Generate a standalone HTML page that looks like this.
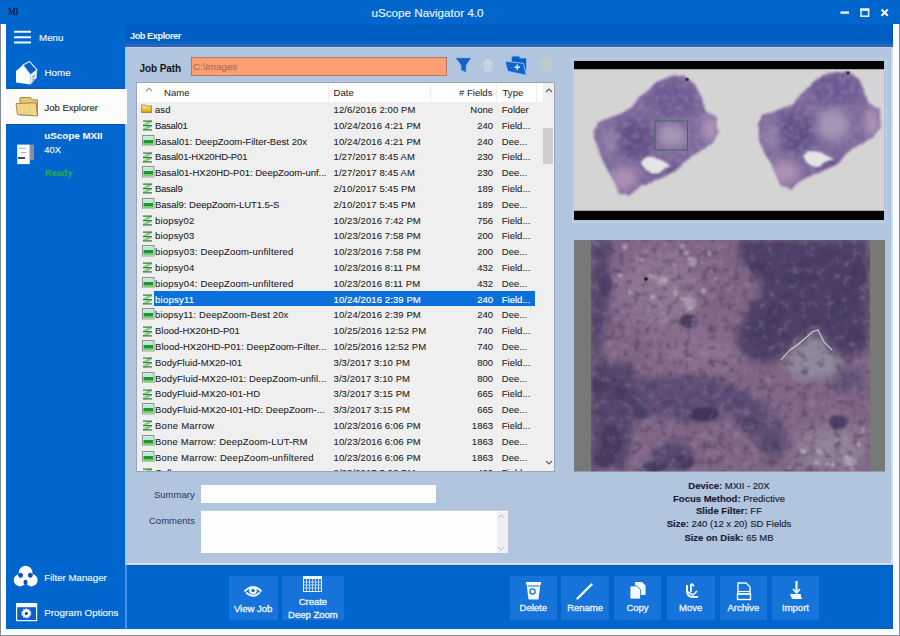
<!DOCTYPE html>
<html><head><meta charset="utf-8">
<style>
*{margin:0;padding:0;box-sizing:border-box}
html,body{width:900px;height:636px;overflow:hidden;background:#7d8a99}
body{position:relative;font-family:"Liberation Sans",sans-serif}
.abs{position:absolute}
svg{display:block}
#frame{position:absolute;left:1px;top:0;width:898px;height:635px;background:#fcfdfe}
#title{position:absolute;left:0;top:0;width:900px;height:24px;background:#0066cc}
#title .t{position:absolute;left:371.5px;top:6px;font-size:11.6px;color:#e6effa;white-space:nowrap;letter-spacing:0.03px;-webkit-text-stroke:0.2px #e6effa}
#nav{position:absolute;left:6px;top:23px;width:119px;height:606px;background:#0066cd}
#hdr{position:absolute;z-index:2;left:125px;top:23.9px;width:768px;height:23px;background:linear-gradient(#005ec2 0,#005ec2 17.6px,#0766cc 17.6px,#0766cc 20px,#2c64b2 20px)}
#hdr .t{position:absolute;left:5px;top:7.4px;font-size:9.3px;font-weight:bold;color:#eef4fc;letter-spacing:-0.5px}
#content{position:absolute;left:125px;top:46px;width:766.5px;height:519px;background:#b1c5de}
#tline{position:absolute;left:125px;top:46.9px;width:766px;height:1.2px;background:#bcd2ee}
#lline{position:absolute;left:125.4px;top:46.5px;width:1.9px;height:518.5px;background:#a6c6ee}
#lline2{position:absolute;left:125.4px;top:565px;width:1.9px;height:64px;background:#4592e2}
#bline{position:absolute;left:125px;top:562.8px;width:766px;height:1.8px;background:#cddff4}
#bline2{position:absolute;left:125px;top:564.6px;width:768px;height:1.4px;background:#0558ba}
#rline{position:absolute;left:891px;top:46.5px;width:2px;height:518.5px;background:#cddcf0}
#tool{position:absolute;left:125px;top:565px;width:768px;height:64px;background:#0066cd}
.navt{position:absolute;font-size:9.8px;color:#f2f6fc;white-space:nowrap;-webkit-text-stroke:0.15px currentColor}
.btn{position:absolute;top:575.5px;height:44px;background:#1573d9}
.btn .l{position:absolute;left:0;width:100%;text-align:center;font-size:9.5px;color:#e8f1fc;white-space:nowrap;-webkit-text-stroke:0.35px #e8f1fc}
.btn svg{position:absolute}
#list{position:absolute;left:136px;top:82px;width:419px;height:389.5px;background:#efefef;border:1px solid #9aa6b6;overflow:hidden}
#lh{position:absolute;left:0;top:0;width:417px;height:19px;background:#fdfdfd}
.row{position:absolute;left:0;width:406px;height:15.8px;font-size:9.5px;color:#222;white-space:nowrap;-webkit-text-stroke:0.08px #222}
.row span{position:absolute;top:2.3px}
.row .ic{position:absolute}
.row .n{left:18px}
.row .d{left:196.5px;letter-spacing:0.1px}
.row .fl{right:50px;text-align:right}
.row .t{left:364.8px}
.row.sel span{color:#fff;-webkit-text-stroke:0.15px #fff}
.sel::before{content:"";position:absolute;left:16.6px;top:-0.2px;width:381.6px;height:15px;background:#0b70d9}
.lhx{position:absolute;top:4.3px;font-size:9.6px;color:#222}
.coldiv{position:absolute;top:0;width:1px;height:19px;background:#ececec}
#sb{position:absolute;left:406px;top:0;width:11px;height:388px;background:#f0f0f0}
#thumb{position:absolute;left:0px;top:45px;width:10px;height:36px;background:#cdcdcd}
.info{position:absolute;left:574px;width:310px;text-align:center;font-size:9.5px;color:#1b2030;white-space:nowrap;-webkit-text-stroke:0.15px #1b2030}
.info b{font-weight:bold}

</style></head><body>
<svg width="0" height="0" style="position:absolute">
<defs>
<symbol id="zig" viewBox="0 0 11 11">
<path d="M9.6 1.2 L1.2 5.6 M9.6 5.6 L1.2 9.8" stroke="#9ad69a" stroke-width="2.6"/>
<path d="M1 1.2 H10 M1 5.6 H10 M1 9.8 H10" stroke="#3a7a40" stroke-width="1.3"/>
<path d="M8.5 2 L2.5 5 M8.5 6.4 L2.5 9.2" stroke="#6cc06c" stroke-width="0.9"/>
</symbol>
<symbol id="dz" viewBox="0 0 13 11.5">
<rect x="0.5" y="0.5" width="11.5" height="10.8" fill="#e8f2ee" stroke="#8a948c"/>
<rect x="1.5" y="1.5" width="9.6" height="3.6" fill="#c2e6da"/>
<rect x="1.5" y="5" width="9.6" height="3.6" fill="#1a9a2a"/>
<rect x="1.5" y="8.5" width="9.6" height="2" fill="#78cc78"/>
</symbol>
<symbol id="fold" viewBox="0 0 11 9">
<linearGradient id="fg" x1="0" y1="0" x2="0" y2="1"><stop offset="0" stop-color="#fff0a0"/><stop offset="0.5" stop-color="#f2cc38"/><stop offset="1" stop-color="#c89a20"/></linearGradient>
<path d="M0.5 1 H4 L5 2 H10.5 V8.5 H0.5 Z" fill="url(#fg)" stroke="#8a6a20" stroke-width="0.7"/>
</symbol>
</defs></svg>

<div id="frame"></div>
<div id="title"><span class="t">uScope Navigator 4.0</span></div>
<div id="nav"></div>
<div id="hdr"><span class="t">Job Explorer</span></div>
<div id="content"></div><div id="tline"></div>
<div id="rline"></div>
<div id="tool"></div>
<div id="bline"></div><div id="bline2"></div><div id="lline"></div><div id="lline2"></div>

<!-- TITLE ICONS -->
<div class="abs" style="left:8px;top:5.5px;font-size:10.5px;line-height:12px;font-weight:bold;color:#0b1d45;font-family:'Liberation Serif',serif;letter-spacing:-0.6px;transform:scaleX(0.78);transform-origin:0 0">MI</div>
<svg class="abs" style="left:838px;top:6px" width="54" height="14">
<path d="M2.5 6.6 H11" stroke="#eef4fc" stroke-width="2.4"/>
<rect x="23" y="3.4" width="7.6" height="6.8" fill="none" stroke="#eef4fc" stroke-width="1.5"/>
<path d="M22.3 3.6 H31.3" stroke="#eef4fc" stroke-width="2.6"/>
<path d="M43.5 3.6 L49.8 9.8 M49.8 3.6 L43.5 9.8" stroke="#f4f8fd" stroke-width="2.1"/>
</svg>

<!-- NAV -->
<svg class="abs" style="left:13px;top:29px" width="20" height="16">
<path d="M1 2.8 H18 M1 8.3 H18 M1 13.5 H18" stroke="#f4f8fd" stroke-width="2"/>
</svg>
<div class="navt" style="left:39px;top:31.8px">Menu</div>
<svg class="abs" style="left:14px;top:60px" width="25" height="26">
<path d="M2 11 L9 5 L16.5 15 L16.5 24.5 L2 22.5 Z" fill="#fbfdff"/>
<path d="M9 5 L15.5 1.5 L23 10 L16.5 15 Z" fill="#0a5cc4" stroke="#e2efff" stroke-width="1.1"/>
<path d="M16.5 15 L23 10 L22.5 18 L16.5 24.5 Z" fill="#e8f0fa"/>
<path d="M18 17.5 L21 15.5 M18 20.5 L20.5 19" stroke="#5a6c88" stroke-width="1"/>
</svg>
<div class="navt" style="left:44.5px;top:67px">Home</div>
<div class="abs" style="left:6px;top:87.4px;width:119px;height:1.4px;background:#0a5cbc"></div>
<div class="abs" style="left:6px;top:88.8px;width:121.3px;height:35px;background:#fbfbfa"></div>
<div class="abs" style="left:6px;top:123.8px;width:119px;height:1.6px;background:#0754b4"></div>
<svg class="abs" style="left:14px;top:95px" width="26" height="23">
<path d="M6 2.5 H16.5 L18 4.8 H23.5 V20 H6 Z" fill="#e8c76a" stroke="#a08446" stroke-width="0.9"/>
<path d="M2 8.5 L22 7.8 L23.5 21 L3.5 19.5 Z" fill="#f1d68a" stroke="#9a7e40" stroke-width="0.9"/>
<path d="M6 10 L7 18 M10 9.8 L10.8 18.5 M15 9.6 L15.5 19" stroke="#e6c874" stroke-width="0.8"/>
</svg>
<div class="navt" style="left:44.5px;top:101.5px;color:#383838;font-size:9.5px;-webkit-text-stroke:0.2px #383838">Job Explorer</div>
<svg class="abs" style="left:16px;top:143px" width="20" height="23">
<rect x="1.2" y="1.6" width="12.6" height="19.5" fill="#fafcff"/>
<rect x="13.8" y="1.6" width="4.2" height="15.5" fill="#8a8f98"/>
<path d="M3 5.2 H10 M5 9.5 H10" stroke="#9aa0aa" stroke-width="0.9"/>
<path d="M2 15 H9" stroke="#1c1c24" stroke-width="1.6"/>
</svg>
<div class="navt" style="left:44.3px;top:129.7px;font-weight:bold;font-size:9.8px;-webkit-text-stroke:0.1px">uScope MXII</div>
<div class="navt" style="left:44.3px;top:144.5px;font-size:9.3px">40X</div>
<div class="navt" style="left:45px;top:168.2px;color:#22ad4c;font-weight:bold;font-size:9.2px;-webkit-text-stroke:0.1px #22ad4c">Ready</div>

<svg class="abs" style="left:13px;top:564px" width="26" height="26">
<circle cx="12.6" cy="8.6" r="6.8" fill="#fafcff"/>
<circle cx="7" cy="16.2" r="6.2" fill="#fafcff"/>
<circle cx="18.4" cy="16.2" r="6.2" fill="#fafcff"/>
<path d="M6 9 L19 9 L21 16 L5 16 Z" fill="#fafcff"/>
<ellipse cx="7.6" cy="11.2" rx="2.4" ry="2.5" fill="#0a52b0"/>
<ellipse cx="17.3" cy="11.2" rx="2.4" ry="2.5" fill="#0a52b0"/>
<ellipse cx="12.5" cy="18.2" rx="2" ry="2.4" fill="#0a52b0"/>
</svg>
<div class="navt" style="left:44.3px;top:572px;font-size:9.7px">Filter Manager</div>
<svg class="abs" style="left:15px;top:602px" width="24" height="20">
<rect x="1.6" y="1.6" width="20" height="17" fill="#0a5fc8" stroke="#f4f8fd" stroke-width="1.2"/>
<rect x="1.2" y="1.2" width="20.8" height="4" fill="#f4f8fd"/>
<path d="M11.3 6 L12.4 7.6 L14.3 7 L14.5 9 L16.4 9.7 L15.6 11.4 L16.4 13.1 L14.5 13.8 L14.3 15.8 L12.4 15.2 L11.3 16.8 L10.2 15.2 L8.3 15.8 L8.1 13.8 L6.2 13.1 L7 11.4 L6.2 9.7 L8.1 9 L8.3 7 L10.2 7.6 Z" fill="#f4f8fd"/>
<circle cx="11.3" cy="11.4" r="1.5" fill="#0a3a80"/>
</svg>
<div class="navt" style="left:44.3px;top:606.5px;font-size:9.8px">Program Options</div>

<!-- PATH -->
<div class="abs" style="left:139.6px;top:62.6px;font-size:10px;font-weight:bold;color:#131820;letter-spacing:-0.1px">Job Path</div>
<div class="abs" style="left:191.3px;top:57px;width:256px;height:19px;background:#fd9f74;border:1px solid #b27a62"></div>
<div class="abs" style="left:193px;top:61.3px;font-size:9.7px;color:#b4735a;-webkit-text-stroke:0.25px #b4735a">C:\Images</div>
<svg class="abs" style="left:453px;top:54px" width="106" height="24">
<path d="M2.7 4 H18 L13 11 V18 L8.2 16 V11 Z" fill="#1062c6" stroke="#5d98e0" stroke-width="0.5"/>
<path d="M34.7 4 L27 11.3 H31 V18 H38.5 V11.3 H42.5 Z" fill="#cad6e3" opacity="0.8"/>
<path d="M58.5 4.5 L59 2 H66.5 L67 4 H73.5 V16.5 H58.5 Z" fill="#0f5fc3" stroke="#8ab8f0" stroke-width="0.9"/>
<path d="M52 7.3 L70.5 9.3 L73.3 21.3 L54.7 17.3 Z" fill="#1164c8" stroke="#9cc4f4" stroke-width="0.9"/>
<path d="M61.5 13.3 H67 M64.3 10.5 V16" stroke="#e8f2ff" stroke-width="1.4"/>
<circle cx="93" cy="10.5" r="7.5" fill="#c9cbc6" opacity="0.55"/>
</svg>

<!-- LIST -->
<div id="list">
<div id="lh">
<svg class="abs" style="left:8px;top:4px" width="8" height="5"><path d="M1 4 L4 1 L7 4" fill="none" stroke="#9a9a9a" stroke-width="1.2"/></svg>
<span class="lhx" style="left:27px">Name</span>
<span class="coldiv" style="left:191px"></span>
<span class="lhx" style="left:196.5px">Date</span>
<span class="coldiv" style="left:293px"></span>
<span class="lhx" style="right:61.5px;text-align:right"># Fields</span>
<span class="coldiv" style="left:359px"></span>
<span class="lhx" style="left:365.5px">Type</span>
<span class="coldiv" style="left:399px"></span>
</div>
<div id="rows" style="position:absolute;left:0;top:0">
<div class="row" style="top:18.80px"><svg class="ic" style="left:4.2px;top:2.2px" width="11.2" height="9"><use href="#fold"/></svg><span class="n" style="letter-spacing:0.057px">asd</span><span class="d">12/6/2016 2:00 PM</span><span class="fl">None</span><span class="t">Folder</span></div>
<div class="row" style="top:34.60px"><svg class="ic" style="left:5px;top:2.5px" width="11" height="11"><use href="#zig"/></svg><span class="n" style="letter-spacing:-0.263px">Basal01</span><span class="d">10/24/2016 4:21 PM</span><span class="fl">240</span><span class="t">Field...</span></div>
<div class="row" style="top:50.40px"><svg class="ic" style="left:4.8px;top:1.3px" width="13" height="11.5"><use href="#dz"/></svg><span class="n" style="letter-spacing:0.033px">Basal01: DeepZoom-Filter-Best 20x</span><span class="d">10/24/2016 4:21 PM</span><span class="fl">240</span><span class="t">Dee...</span></div>
<div class="row" style="top:66.20px"><svg class="ic" style="left:5px;top:2.5px" width="11" height="11"><use href="#zig"/></svg><span class="n" style="letter-spacing:-0.153px">Basal01-HX20HD-P01</span><span class="d">1/27/2017 8:45 AM</span><span class="fl">230</span><span class="t">Field...</span></div>
<div class="row" style="top:82.00px"><svg class="ic" style="left:4.8px;top:1.3px" width="13" height="11.5"><use href="#dz"/></svg><span class="n" style="letter-spacing:-0.003px">Basal01-HX20HD-P01: DeepZoom-unf...</span><span class="d">1/27/2017 8:45 AM</span><span class="fl">230</span><span class="t">Dee...</span></div>
<div class="row" style="top:97.80px"><svg class="ic" style="left:5px;top:2.5px" width="11" height="11"><use href="#zig"/></svg><span class="n" style="letter-spacing:-0.260px">Basal9</span><span class="d">2/10/2017 5:45 PM</span><span class="fl">189</span><span class="t">Field...</span></div>
<div class="row" style="top:113.60px"><svg class="ic" style="left:4.8px;top:1.3px" width="13" height="11.5"><use href="#dz"/></svg><span class="n" style="letter-spacing:-0.034px">Basal9: DeepZoom-LUT1.5-S</span><span class="d">2/10/2017 5:45 PM</span><span class="fl">189</span><span class="t">Dee...</span></div>
<div class="row" style="top:129.40px"><svg class="ic" style="left:5px;top:2.5px" width="11" height="11"><use href="#zig"/></svg><span class="n" style="letter-spacing:0.171px">biopsy02</span><span class="d">10/23/2016 7:42 PM</span><span class="fl">756</span><span class="t">Field...</span></div>
<div class="row" style="top:145.20px"><svg class="ic" style="left:5px;top:2.5px" width="11" height="11"><use href="#zig"/></svg><span class="n" style="letter-spacing:0.171px">biopsy03</span><span class="d">10/23/2016 7:58 PM</span><span class="fl">200</span><span class="t">Field...</span></div>
<div class="row" style="top:161.00px"><svg class="ic" style="left:4.8px;top:1.3px" width="13" height="11.5"><use href="#dz"/></svg><span class="n" style="letter-spacing:0.209px">biopsy03: DeepZoom-unfiltered</span><span class="d">10/23/2016 7:58 PM</span><span class="fl">200</span><span class="t">Dee...</span></div>
<div class="row" style="top:176.80px"><svg class="ic" style="left:5px;top:2.5px" width="11" height="11"><use href="#zig"/></svg><span class="n" style="letter-spacing:0.171px">biopsy04</span><span class="d">10/23/2016 8:11 PM</span><span class="fl">432</span><span class="t">Field...</span></div>
<div class="row" style="top:192.60px"><svg class="ic" style="left:4.8px;top:1.3px" width="13" height="11.5"><use href="#dz"/></svg><span class="n" style="letter-spacing:0.209px">biopsy04: DeepZoom-unfiltered</span><span class="d">10/23/2016 8:11 PM</span><span class="fl">432</span><span class="t">Dee...</span></div>
<div class="row sel" style="top:208.40px"><svg class="ic" style="left:5px;top:2.5px" width="11" height="11"><use href="#zig"/></svg><span class="n" style="letter-spacing:0.259px">biopsy11</span><span class="d">10/24/2016 2:39 PM</span><span class="fl">240</span><span class="t">Field...</span></div>
<div class="row" style="top:224.20px"><svg class="ic" style="left:4.8px;top:1.3px" width="13" height="11.5"><use href="#dz"/></svg><span class="n" style="letter-spacing:0.139px">biopsy11: DeepZoom-Best 20x</span><span class="d">10/24/2016 2:39 PM</span><span class="fl">240</span><span class="t">Dee...</span></div>
<div class="row" style="top:240.00px"><svg class="ic" style="left:5px;top:2.5px" width="11" height="11"><use href="#zig"/></svg><span class="n" style="letter-spacing:-0.013px">Blood-HX20HD-P01</span><span class="d">10/25/2016 12:52 PM</span><span class="fl">740</span><span class="t">Field...</span></div>
<div class="row" style="top:255.80px"><svg class="ic" style="left:4.8px;top:1.3px" width="13" height="11.5"><use href="#dz"/></svg><span class="n" style="letter-spacing:0.070px">Blood-HX20HD-P01: DeepZoom-Filter...</span><span class="d">10/25/2016 12:52 PM</span><span class="fl">740</span><span class="t">Dee...</span></div>
<div class="row" style="top:271.60px"><svg class="ic" style="left:5px;top:2.5px" width="11" height="11"><use href="#zig"/></svg><span class="n" style="letter-spacing:0.033px">BodyFluid-MX20-I01</span><span class="d">3/3/2017 3:10 PM</span><span class="fl">800</span><span class="t">Field...</span></div>
<div class="row" style="top:287.40px"><svg class="ic" style="left:4.8px;top:1.3px" width="13" height="11.5"><use href="#dz"/></svg><span class="n" style="letter-spacing:0.111px">BodyFluid-MX20-I01: DeepZoom-unfil...</span><span class="d">3/3/2017 3:10 PM</span><span class="fl">800</span><span class="t">Dee...</span></div>
<div class="row" style="top:303.20px"><svg class="ic" style="left:5px;top:2.5px" width="11" height="11"><use href="#zig"/></svg><span class="n" style="letter-spacing:0.082px">BodyFluid-MX20-I01-HD</span><span class="d">3/3/2017 3:15 PM</span><span class="fl">665</span><span class="t">Field...</span></div>
<div class="row" style="top:319.00px"><svg class="ic" style="left:4.8px;top:1.3px" width="13" height="11.5"><use href="#dz"/></svg><span class="n" style="letter-spacing:0.090px">BodyFluid-MX20-I01-HD: DeepZoom-...</span><span class="d">3/3/2017 3:15 PM</span><span class="fl">665</span><span class="t">Dee...</span></div>
<div class="row" style="top:334.80px"><svg class="ic" style="left:5px;top:2.5px" width="11" height="11"><use href="#zig"/></svg><span class="n" style="letter-spacing:0.264px">Bone Marrow</span><span class="d">10/23/2016 6:06 PM</span><span class="fl">1863</span><span class="t">Field...</span></div>
<div class="row" style="top:350.60px"><svg class="ic" style="left:4.8px;top:1.3px" width="13" height="11.5"><use href="#dz"/></svg><span class="n" style="letter-spacing:0.193px">Bone Marrow: DeepZoom-LUT-RM</span><span class="d">10/23/2016 6:06 PM</span><span class="fl">1863</span><span class="t">Dee...</span></div>
<div class="row" style="top:366.40px"><svg class="ic" style="left:4.8px;top:1.3px" width="13" height="11.5"><use href="#dz"/></svg><span class="n" style="letter-spacing:0.246px">Bone Marrow: DeepZoom-unfiltered</span><span class="d">10/23/2016 6:06 PM</span><span class="fl">1863</span><span class="t">Dee...</span></div>
<div class="row" style="top:382.20px"><svg class="ic" style="left:5px;top:2.5px" width="11" height="11"><use href="#zig"/></svg><span class="n">Cells</span><span class="d">2/28/2017 3:08 PM</span><span class="fl">400</span><span class="t">Field...</span></div>
</div>
<div id="sb"><div id="thumb"></div>
<svg class="abs" style="left:2px;top:5px" width="8" height="5"><path d="M1 4 L4 1 L7 4" fill="none" stroke="#606060" stroke-width="1.2"/></svg>
<svg class="abs" style="left:2px;top:377px" width="8" height="5"><path d="M1 1 L4 4 L7 1" fill="none" stroke="#606060" stroke-width="1.2"/></svg>
</div>
</div>

<!-- SUMMARY -->
<div class="abs" style="left:154px;top:489px;font-size:9.5px;color:#28385a">Summary</div>
<div class="abs" style="left:200.7px;top:484.6px;width:235px;height:18.2px;background:#fdfdfd"></div>
<div class="abs" style="left:149px;top:515px;font-size:9.5px;color:#28385a">Comments</div>
<div class="abs" style="left:200.7px;top:510.4px;width:307.5px;height:43px;background:#fdfdfd;border-top:1px solid #c4cedc"></div>
<div class="abs" style="left:497px;top:511.5px;width:10.5px;height:41.5px;background:#efeff2"></div>
<svg class="abs" style="left:496px;top:513px" width="10" height="40">
<path d="M2 5 L5 2 L8 5" fill="none" stroke="#b8b8b8" stroke-width="1"/>
<path d="M2 34 L5 37 L8 34" fill="none" stroke="#b8b8b8" stroke-width="1"/>
</svg>

<!-- IMAGES -->
<div class="abs" style="left:571.5px;top:58px;width:315px;height:164.5px;border:1.6px solid #c0d2ea"></div>
<svg class="abs" style="left:574px;top:60.5px" width="310" height="159.5" viewBox="574 60.5 310 159.5">
<defs>
<filter id="rough" x="-5%" y="-5%" width="110%" height="110%">
<feTurbulence type="fractalNoise" baseFrequency="0.09" numOctaves="2" seed="3" result="t"/>
<feDisplacementMap in="SourceGraphic" in2="t" scale="3" xChannelSelector="R" yChannelSelector="G"/>
<feGaussianBlur stdDeviation="0.9"/>
</filter>
<filter id="bl3" x="-50%" y="-50%" width="200%" height="200%"><feGaussianBlur stdDeviation="4"/></filter>
<filter id="tex1" x="0" y="0" width="100%" height="100%">
<feTurbulence type="fractalNoise" baseFrequency="0.18" numOctaves="2" seed="11" result="n"/>
<feColorMatrix in="n" type="matrix" values="0 0 0 0 0.40  0 0 0 0 0.33  0 0 0 0 0.52  0 0 0 0.9 -0.38" result="c"/>
<feComposite in="c" in2="SourceGraphic" operator="in" result="c2"/>
<feMerge><feMergeNode in="SourceGraphic"/><feMergeNode in="c2"/></feMerge>
</filter>
<clipPath id="cpL"><path d="M593.8 131 L598.2 122.2 L611.4 116.7 L624.6 112.3 L635.6 102.4 L644.4 93.6 L657.6 81.5 L673 74.9 L686.3 77.1 L695.1 84.8 L701.7 98 L705 111.2 L714.9 115.6 L718.2 131 L712.7 142 L699.5 150.8 L686.3 159.7 L677.5 168.5 L662 177.3 L642.2 183.9 L629 194.9 L620.2 192.7 L613.6 179.5 L604.8 164 L598.2 148.6 Z"/></clipPath>
<clipPath id="cpR"><path d="M758.2 123.8 L762.6 115 L775.8 110.6 L793.4 104 L802.2 93 L815.4 79.8 L828.6 72.1 L848.5 71 L859.5 79.8 L866.1 95.2 L868.3 104 L879.3 108.4 L880.4 126 L872.7 137 L859.5 143.6 L846.3 152.5 L837.5 163.5 L817.6 172.3 L802.2 178.9 L791.2 188.8 L780.2 183.3 L773.6 167.9 L764.8 152.5 L758.2 137 Z"/></clipPath>
</defs>
<rect x="574" y="60.5" width="310" height="159.5" fill="#d4d4d4"/>
<g filter="url(#rough)">
<path d="M593.8 131 L598.2 122.2 L611.4 116.7 L624.6 112.3 L635.6 102.4 L644.4 93.6 L657.6 81.5 L673 74.9 L686.3 77.1 L695.1 84.8 L701.7 98 L705 111.2 L714.9 115.6 L718.2 131 L712.7 142 L699.5 150.8 L686.3 159.7 L677.5 168.5 L662 177.3 L642.2 183.9 L629 194.9 L620.2 192.7 L613.6 179.5 L604.8 164 L598.2 148.6 Z" fill="none" stroke="#c0aac6" stroke-width="2.2"/>
<path d="M758.2 123.8 L762.6 115 L775.8 110.6 L793.4 104 L802.2 93 L815.4 79.8 L828.6 72.1 L848.5 71 L859.5 79.8 L866.1 95.2 L868.3 104 L879.3 108.4 L880.4 126 L872.7 137 L859.5 143.6 L846.3 152.5 L837.5 163.5 L817.6 172.3 L802.2 178.9 L791.2 188.8 L780.2 183.3 L773.6 167.9 L764.8 152.5 L758.2 137 Z" fill="none" stroke="#c0aac6" stroke-width="2.2"/>
<g clip-path="url(#cpL)" filter="url(#tex1)">
<rect x="590" y="70" width="132" height="130" fill="#7c689a"/>
<g filter="url(#bl3)">
<ellipse cx="635" cy="138" rx="20" ry="20" fill="#5e4e86"/>
<ellipse cx="672" cy="100" rx="24" ry="18" fill="#6a5892"/>
<ellipse cx="610" cy="140" rx="8" ry="14" fill="#9282a8"/>
<ellipse cx="624" cy="178" rx="13" ry="12" fill="#ad90b4"/>
<ellipse cx="672" cy="171" rx="10" ry="5" fill="#5a4a82"/>
<ellipse cx="710" cy="128" rx="8" ry="14" fill="#ae94b6"/>
<ellipse cx="672" cy="135" rx="14" ry="12" fill="#a496b6"/>
</g>
</g>
<g clip-path="url(#cpR)" filter="url(#tex1)">
<rect x="750" y="65" width="135" height="130" fill="#7c689a"/>
<g filter="url(#bl3)">
<ellipse cx="795" cy="132" rx="20" ry="20" fill="#5e4e86"/>
<ellipse cx="835" cy="90" rx="24" ry="16" fill="#6a5892"/>
<ellipse cx="772" cy="136" rx="8" ry="14" fill="#9282a8"/>
<ellipse cx="785" cy="172" rx="14" ry="12" fill="#ad90b4"/>
<ellipse cx="833" cy="165" rx="10" ry="5" fill="#5a4a82"/>
<ellipse cx="872" cy="122" rx="8" ry="14" fill="#ae94b6"/>
<ellipse cx="833" cy="124" rx="16" ry="16" fill="#a494b6"/>
</g>
</g>
</g>
<path d="M641 162 Q645 154 655 157 Q664 160 672 166 Q662 167 658 172 Q646 174 641 162 Z" fill="#e4e4e6" filter="url(#rough)"/>
<path d="M803 156 Q807 149 817 151 Q826 154 834 159 Q824 160 820 166 Q808 168 803 156 Z" fill="#e4e4e6" filter="url(#rough)"/>
<circle cx="687" cy="79" r="1.8" fill="#3a2a40"/>
<circle cx="848" cy="72.5" r="1.8" fill="#3a2a40"/>
<rect x="655" y="120.5" width="32.5" height="29" fill="none" stroke="#3e6a58" stroke-width="1"/>
<rect x="574" y="60.5" width="310" height="8.2" fill="#030303"/>
<rect x="574" y="210.3" width="310" height="9.7" fill="#030303"/>
</svg>

<svg class="abs" style="left:574px;top:240px" width="311" height="231.5" viewBox="574 240 311 231.5">
<defs>
<filter id="bl4b" x="-50%" y="-50%" width="200%" height="200%"><feGaussianBlur stdDeviation="4"/></filter>
<filter id="bl2b" x="-50%" y="-50%" width="200%" height="200%"><feGaussianBlur stdDeviation="1.8"/></filter>
<filter id="bl8" x="-50%" y="-50%" width="200%" height="200%"><feGaussianBlur stdDeviation="8"/></filter>
<filter id="tex2" x="0" y="0" width="100%" height="100%" color-interpolation-filters="sRGB">
<feTurbulence type="fractalNoise" baseFrequency="0.12" numOctaves="2" seed="5" result="n"/>
<feColorMatrix in="n" type="matrix" values="0 0 0 0 0.25  0 0 0 0 0.20  0 0 0 0 0.30  -1.4 0 0 0 0.68" result="dk"/>
<feColorMatrix in="n" type="matrix" values="0 0 0 0 0.70  0 0 0 0 0.64  0 0 0 0 0.72  0.9 0 0 0 -0.52" result="lt"/>
<feMerge result="m"><feMergeNode in="SourceGraphic"/><feMergeNode in="dk"/><feMergeNode in="lt"/></feMerge>
<feComposite in="m" in2="SourceAlpha" operator="in"/>
</filter>
</defs>
<rect x="574" y="240" width="311" height="231.5" fill="#777977"/>
<svg x="591" y="240" width="279" height="231.5" viewBox="591 240 279 231.5">
<g filter="url(#tex2)">
<rect x="591" y="240" width="279" height="231.5" fill="#806686"/>
<g filter="url(#bl8)">
<ellipse cx="660" cy="290" rx="40" ry="42" fill="#8c7590"/>
<ellipse cx="830" cy="448" rx="35" ry="22" fill="#908094"/>
<ellipse cx="700" cy="352" rx="40" ry="18" fill="#8a718c"/>
<ellipse cx="605" cy="345" rx="14" ry="12" fill="#88708a"/>
</g>
<g filter="url(#bl4b)">
<path fill="#4e4068" d="M736 240 L868 240 L868 348 L849 359.6 L826.7 348 L815.4 333.2 L796.5 348 L781.4 359.6 L762.5 363.4 L743.6 355.8 L736 337 L747.4 310.5 L762.5 291.6 L758.7 276.5 L743.6 265.2 L739.8 250 Z"/>
<path fill="#8e869a" d="M781 360 L796.5 344.5 L815.4 331.3 L826.7 344.5 L841.8 363.4 L834.2 378.5 L796.5 378.5 Z"/>
<path fill="#54466c" d="M591 240 L612 240 L608 273 L608 318 L600 360 L591 360 Z"/>
<path fill="#54466c" d="M591 360 L634 365 L634 420 L625 469 L591 469 Z"/>
<path fill="#5e4e74" d="M634 378.5 L698 374.7 L736 386 L762.5 401 L781 423.8 L789 446.5 L774 461.6 L755 439 L728.5 412.5 L698 423.8 L660.5 416.3 L634 416.3 Z"/>
<ellipse cx="674" cy="456" rx="20" ry="14" fill="#564870"/>
<ellipse cx="848" cy="380" rx="16" ry="13" fill="#625478"/>
</g>
<g filter="url(#bl2b)">
<ellipse cx="704" cy="414" rx="15" ry="7" fill="#40345a"/>
<ellipse cx="838" cy="422" rx="9" ry="7" fill="#4a3e64"/>
<ellipse cx="688" cy="321" rx="8" ry="7" fill="#463a60"/>
<ellipse cx="612" cy="440" rx="11" ry="14" fill="#463a60"/>
<ellipse cx="800" cy="275" rx="20" ry="12" fill="#4a3e64"/>
<ellipse cx="840" cy="300" rx="14" ry="20" fill="#483c62"/>
<ellipse cx="765" cy="330" rx="14" ry="14" fill="#4a3e64"/>
<ellipse cx="620" cy="392" rx="8" ry="9" fill="#4a3e64"/>
<ellipse cx="640" cy="412" rx="7" ry="8" fill="#4e4266"/>
<ellipse cx="605" cy="285" rx="7" ry="12" fill="#4e4266"/>
<ellipse cx="770" cy="255" rx="14" ry="8" fill="#4e4266"/>
<ellipse cx="655" cy="466" rx="12" ry="6" fill="#4a3e64"/>
<ellipse cx="760" cy="268" rx="10" ry="7" fill="#463a60"/>
<ellipse cx="828" cy="256" rx="12" ry="8" fill="#4a3e64"/>
<ellipse cx="858" cy="275" rx="8" ry="12" fill="#463a60"/>
<ellipse cx="805" cy="305" rx="12" ry="9" fill="#4a3e64"/>
<ellipse cx="775" cy="315" rx="9" ry="10" fill="#463a60"/>
<ellipse cx="852" cy="335" rx="10" ry="8" fill="#463a60"/>
<ellipse cx="600" cy="385" rx="8" ry="10" fill="#4a3e64"/>
<ellipse cx="632" cy="398" rx="8" ry="7" fill="#4e4266"/>
<ellipse cx="604" cy="458" rx="10" ry="9" fill="#463a60"/>
<ellipse cx="684" cy="462" rx="10" ry="7" fill="#4a3e64"/>
<ellipse cx="750" cy="425" rx="9" ry="8" fill="#52466a"/>
<ellipse cx="770" cy="445" rx="8" ry="9" fill="#52466a"/>
</g>
</g>
<path d="M781 360 L790 350 L800 343 L812 332 L818 330 L824 342 L832 350" fill="none" stroke="#e0dae6" stroke-width="1.1" opacity="0.85"/>
<filter id="bl06" x="-50%" y="-50%" width="200%" height="200%"><feGaussianBlur stdDeviation="0.9"/></filter>
<g fill="#d2c8d6" opacity="0.5" filter="url(#bl06)">
<ellipse cx="625.9" cy="244.8" rx="1.6" ry="1.1"/>
<ellipse cx="624.5" cy="247.2" rx="2.5" ry="2.7"/>
<ellipse cx="642.1" cy="259.8" rx="1.9" ry="1.4"/>
<ellipse cx="637.4" cy="258.8" rx="1.3" ry="1.6"/>
<ellipse cx="654.6" cy="277.5" rx="2.3" ry="1.6"/>
<ellipse cx="650.5" cy="276.0" rx="2.2" ry="2.4"/>
<ellipse cx="665.0" cy="279.7" rx="2.0" ry="2.0"/>
<ellipse cx="662.0" cy="280.4" rx="1.8" ry="1.1"/>
<ellipse cx="675.5" cy="294.9" rx="1.9" ry="1.5"/>
<ellipse cx="675.3" cy="292.6" rx="2.4" ry="2.7"/>
<ellipse cx="684.1" cy="299.3" rx="2.0" ry="1.7"/>
<ellipse cx="681.3" cy="298.4" rx="2.3" ry="1.4"/>
<ellipse cx="686.4" cy="311.0" rx="1.4" ry="1.3"/>
<ellipse cx="689.8" cy="308.7" rx="2.6" ry="1.9"/>
<ellipse cx="693.3" cy="319.6" rx="2.0" ry="1.5"/>
<ellipse cx="692.8" cy="324.0" rx="1.5" ry="1.4"/>
<ellipse cx="703.2" cy="258.8" rx="1.1" ry="0.8"/>
<ellipse cx="702.1" cy="262.9" rx="1.4" ry="1.1"/>
<ellipse cx="703.4" cy="249.7" rx="1.1" ry="1.1"/>
<ellipse cx="709.2" cy="253.6" rx="2.2" ry="2.6"/>
<ellipse cx="686.1" cy="253.3" rx="2.5" ry="2.7"/>
<ellipse cx="689.3" cy="258.5" rx="2.0" ry="2.2"/>
<ellipse cx="674.3" cy="265.5" rx="1.7" ry="1.2"/>
<ellipse cx="675.1" cy="271.7" rx="1.5" ry="0.9"/>
<ellipse cx="651.4" cy="297.4" rx="2.3" ry="1.8"/>
<ellipse cx="653.3" cy="296.8" rx="2.6" ry="2.2"/>
<ellipse cx="643.7" cy="251.5" rx="1.1" ry="0.8"/>
<ellipse cx="647.4" cy="252.2" rx="1.1" ry="1.0"/>
<ellipse cx="616.0" cy="280.0" rx="1.2" ry="1.1"/>
<ellipse cx="620.2" cy="275.3" rx="2.6" ry="2.3"/>
<ellipse cx="629.9" cy="289.3" rx="1.1" ry="0.9"/>
<ellipse cx="630.0" cy="293.1" rx="2.3" ry="2.1"/>
<ellipse cx="664.3" cy="314.0" rx="1.4" ry="1.0"/>
<ellipse cx="665.9" cy="319.0" rx="1.2" ry="0.8"/>
<ellipse cx="703.4" cy="290.5" rx="2.6" ry="2.2"/>
<ellipse cx="703.2" cy="291.2" rx="2.3" ry="2.4"/>
<ellipse cx="712.0" cy="271.7" rx="1.3" ry="1.5"/>
<ellipse cx="715.2" cy="278.4" rx="1.5" ry="1.5"/>
<ellipse cx="682.4" cy="246.1" rx="2.3" ry="2.1"/>
<ellipse cx="681.2" cy="246.5" rx="1.4" ry="1.6"/>
<ellipse cx="803.7" cy="451.6" rx="2.4" ry="2.8"/>
<ellipse cx="801.3" cy="451.4" rx="2.3" ry="1.5"/>
<ellipse cx="818.7" cy="463.3" rx="1.1" ry="0.8"/>
<ellipse cx="816.1" cy="462.6" rx="2.0" ry="2.4"/>
<ellipse cx="827.7" cy="464.0" rx="2.3" ry="1.4"/>
<ellipse cx="833.0" cy="464.9" rx="2.1" ry="2.3"/>
<ellipse cx="848.0" cy="458.4" rx="2.2" ry="1.6"/>
<ellipse cx="846.4" cy="456.6" rx="2.2" ry="2.4"/>
<ellipse cx="857.8" cy="445.2" rx="1.0" ry="0.6"/>
<ellipse cx="858.8" cy="444.9" rx="2.2" ry="2.1"/>
<ellipse cx="863.1" cy="428.9" rx="2.1" ry="1.9"/>
<ellipse cx="862.1" cy="432.7" rx="2.2" ry="1.4"/>
<ellipse cx="838.3" cy="439.0" rx="2.1" ry="1.7"/>
<ellipse cx="835.9" cy="439.9" rx="2.4" ry="1.5"/>
<ellipse cx="818.9" cy="451.0" rx="2.2" ry="2.0"/>
<ellipse cx="821.5" cy="452.9" rx="2.1" ry="1.3"/>
<ellipse cx="793.1" cy="462.6" rx="1.4" ry="1.6"/>
<ellipse cx="789.4" cy="467.4" rx="1.2" ry="1.4"/>
<ellipse cx="849.4" cy="463.2" rx="1.7" ry="1.4"/>
<ellipse cx="852.3" cy="469.2" rx="2.0" ry="1.2"/>
</g>
<g fill="#c8bccc" opacity="0.45" filter="url(#bl2b)">
<ellipse cx="662" cy="281" rx="6" ry="5"/><ellipse cx="690" cy="303" rx="6" ry="7"/><ellipse cx="693" cy="262" rx="4" ry="5"/><ellipse cx="850" cy="462" rx="7" ry="5"/>
</g>
<circle cx="646" cy="279" r="1.8" fill="#201828"/>
</svg>
</svg>


<!-- INFO -->
<div class="info" style="top:480.2px"><b>Device:</b> MXII - 20X</div>
<div class="info" style="top:492.7px"><b>Focus Method:</b> Predictive</div>
<div class="info" style="top:505.2px"><b>Slide Filter:</b> FF</div>
<div class="info" style="top:518.2px"><b>Size:</b> 240 (12 x 20) SD Fields</div>
<div class="info" style="top:531.7px"><b>Size on Disk:</b> 65 MB</div>

<!-- TOOLBAR -->
<div class="btn" style="left:228.5px;width:49.3px"><span class="l" style="top:27px">View Job</span>
<svg style="left:14.5px;top:7.5px" width="20" height="16">
<path d="M1.5 8.5 Q10 -0.5 18.5 8.5" fill="none" stroke="#f2f7fd" stroke-width="2"/>
<path d="M3 9.5 Q10 16 17 9.5" fill="none" stroke="#f2f7fd" stroke-width="1.8"/>
<circle cx="10" cy="7.6" r="3.8" fill="#f2f7fd"/>
<circle cx="10" cy="7.6" r="1.6" fill="#0f5fb8"/>
</svg>
</div>
<div class="btn" style="left:282px;width:61.8px"><span class="l" style="top:20px">Create</span><span class="l" style="top:33px">Deep Zoom</span>
<svg style="left:21px;top:0.5px" width="19" height="16">
<rect x="0.5" y="0.5" width="18" height="15" fill="none" stroke="#eef5fd" stroke-width="1"/>
<rect x="0.5" y="0.5" width="18" height="2.5" fill="#eef5fd"/>
<path d="M3.5 3 V15.5 M6.5 3 V15.5 M9.5 3 V15.5 M12.5 3 V15.5 M15.5 3 V15.5 M0.5 6 H18.5 M0.5 9 H18.5 M0.5 12 H18.5" stroke="#dbe8f8" stroke-width="0.8"/>
</svg>
</div>
<div class="btn" style="left:509.8px;width:47px"><span class="l" style="top:26.6px">Delete</span>
<svg style="left:15px;top:5px" width="17" height="20">
<path d="M1.5 2.5 H15.5 L13.5 18.5 H3.5 Z" fill="#f4f8fd"/>
<rect x="1" y="1" width="15" height="2.5" fill="#f4f8fd"/>
<path d="M2.5 5 H14.5" stroke="#1573d9" stroke-width="1"/>
<circle cx="7.5" cy="10.5" r="2.6" fill="none" stroke="#1573d9" stroke-width="1.3"/>
</svg>
</div>
<div class="btn" style="left:561.3px;width:47.6px"><span class="l" style="top:26.6px">Rename</span>
<svg style="left:15px;top:6px" width="18" height="18">
<path d="M1.5 16.5 L15.5 2.5" stroke="#f4f8fd" stroke-width="2.4" stroke-linecap="round"/>
</svg>
</div>
<div class="btn" style="left:614.2px;width:46.7px"><span class="l" style="top:26.6px">Copy</span>
<svg style="left:15px;top:5.5px" width="18" height="19">
<path d="M6 1 H13 L16.5 4.5 V14 H6 Z" fill="#f4f8fd"/>
<path d="M1 5 H8 L11.5 8.5 V18 H1 Z" fill="#f4f8fd" stroke="#1573d9" stroke-width="0.8"/>
</svg>
</div>
<div class="btn" style="left:666.7px;width:48px"><span class="l" style="top:26.6px">Move</span>
<svg style="left:17px;top:7px" width="16" height="17">
<path d="M3 2 V8 Q3 14 9 14 H14" fill="none" stroke="#f4f8fd" stroke-width="2"/>
<path d="M7 1 V9 M10 3 L7 0.5" fill="none" stroke="#f4f8fd" stroke-width="1.8"/>
<path d="M4 9 L9 12 L13 8" fill="none" stroke="#f4f8fd" stroke-width="1.6"/>
</svg>
</div>
<div class="btn" style="left:720px;width:46.7px"><span class="l" style="top:26.6px">Archive</span>
<svg style="left:15.5px;top:6px" width="17" height="19">
<path d="M2 1 H10 L14 5 V12 H2 Z" fill="none" stroke="#f4f8fd" stroke-width="1.4"/>
<rect x="1.5" y="12" width="13" height="5.5" fill="none" stroke="#f4f8fd" stroke-width="1.4"/>
<path d="M2 9.5 H14" stroke="#f4f8fd" stroke-width="1.2"/>
</svg>
</div>
<div class="btn" style="left:772px;width:47px"><span class="l" style="top:26.6px">Import</span>
<svg style="left:15.5px;top:4.5px" width="17" height="20">
<path d="M8.5 1 V12" stroke="#f4f8fd" stroke-width="2.2"/>
<path d="M5 9 L8.5 13 L12 9" fill="none" stroke="#f4f8fd" stroke-width="1.8"/>
<path d="M2 14 L4 19 H14 L12.5 14" fill="#f4f8fd"/>
</svg>
</div>

</body></html>
